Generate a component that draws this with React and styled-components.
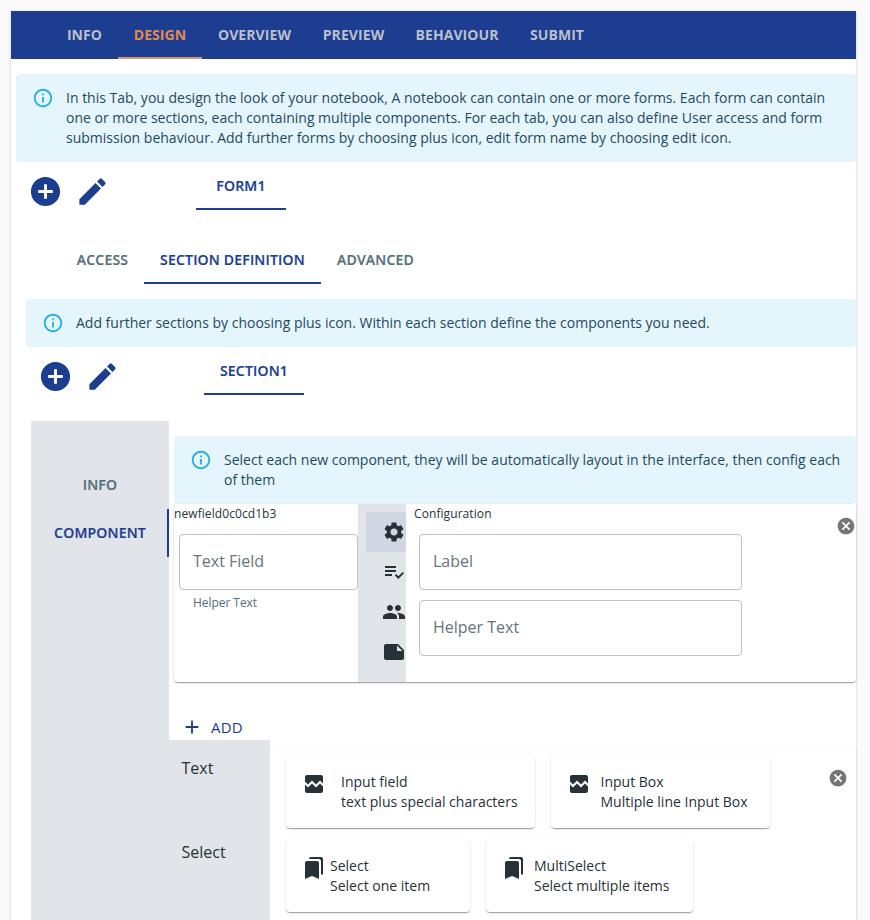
import React from 'react';
import styled, { createGlobalStyle } from 'styled-components';

const NAVY = '#1c3d90';
const INK = '#263238';
const MUTED = '#546e7a';
const PANEL = '#e1e4e8';
const paperShadow = '0 2px 1px -1px rgba(0,0,0,.2), 0 1px 1px rgba(0,0,0,.14), 0 1px 3px rgba(0,0,0,.12)';

const GlobalStyle = createGlobalStyle`
  * { box-sizing: border-box; }
  body {
    margin: 0;
    height: 920px;
    overflow: hidden;
    background: #fafafd;
    color: ${INK};
    font-family: "Open Sans", "Noto Sans", sans-serif;
    font-size: 14px;
    line-height: 20px;
  }
  button { font: inherit; border: 0; background: none; padding: 0; }
`;

const paths = {
  info: 'M11 7h2v2h-2zm0 4h2v6h-2zm1-9C6.48 2 2 6.48 2 12s4.48 10 10 10 10-4.48 10-10S17.52 2 12 2zm0 18c-4.41 0-8-3.59-8-8s3.59-8 8-8 8 3.59 8 8-3.59 8-8 8z',
  addCircle: 'M12 2C6.48 2 2 6.48 2 12s4.48 10 10 10 10-4.48 10-10S17.52 2 12 2zm5 11h-4v4h-2v-4H7v-2h4V7h2v4h4v2z',
  edit: 'M3 17.25V21h3.75L17.81 9.94l-3.75-3.75L3 17.25zM20.71 7.04c.39-.39.39-1.02 0-1.41l-2.34-2.34a.9959.9959 0 0 0-1.41 0l-1.83 1.83 3.75 3.75 1.83-1.83z',
  settings: 'M19.14 12.94c.04-.3.06-.61.06-.94 0-.32-.02-.64-.07-.94l2.03-1.58c.18-.14.23-.41.12-.61l-1.92-3.32c-.12-.22-.37-.29-.59-.22l-2.39.96c-.5-.38-1.03-.7-1.62-.94l-.36-2.54c-.04-.24-.24-.41-.48-.41h-3.84c-.24 0-.43.17-.47.41l-.36 2.54c-.59.24-1.13.57-1.62.94l-2.39-.96c-.22-.08-.47 0-.59.22L2.74 8.87c-.12.21-.08.47.12.61l2.03 1.58c-.05.3-.09.63-.09.94s.02.64.07.94l-2.03 1.58c-.18.14-.23.41-.12.61l1.92 3.32c.12.22.37.29.59.22l2.39-.96c.5.38 1.03.7 1.62.94l.36 2.54c.05.24.24.41.48.41h3.84c.24 0 .44-.17.47-.41l.36-2.54c.59-.24 1.13-.56 1.62-.94l2.39.96c.22.08.47 0 .59-.22l1.92-3.32c.12-.22.07-.47-.12-.61l-2.01-1.58zM12 15.6c-1.98 0-3.6-1.62-3.6-3.6s1.62-3.6 3.6-3.6 3.6 1.62 3.6 3.6-1.62 3.6-3.6 3.6z',
  checklist: 'M3 10h11v2H3zm0-4h11v2H3zm0 8h7v2H3zm17.59-2.07-4.25 4.24-2.12-2.12-1.41 1.41L16.34 19 22 13.34z',
  group: 'M16 11c1.66 0 2.99-1.34 2.99-3S17.66 5 16 5c-1.66 0-3 1.34-3 3s1.34 3 3 3zm-8 0c1.66 0 2.99-1.34 2.99-3S9.66 5 8 5C6.34 5 5 6.34 5 8s1.34 3 3 3zm0 2c-2.33 0-7 1.17-7 3.5V19h14v-2.5c0-2.33-4.67-3.5-7-3.5zm8 0c-.29 0-.62.02-.97.05 1.16.84 1.97 1.97 1.97 3.45V19h6v-2.5c0-2.33-4.67-3.5-7-3.5z',
  note: 'M22 10l-6-6H4c-1.1 0-2 .9-2 2v12.01c0 1.1.9 1.99 2 1.99l16-.01c1.1 0 2-.89 2-1.99v-8zm-7-4.5l5.5 5.5H15V5.5z',
  cancel: 'M12 2C6.47 2 2 6.47 2 12s4.47 10 10 10 10-4.47 10-10S17.53 2 12 2zm5 13.59L15.59 17 12 13.41 8.41 17 7 15.59 10.59 12 7 8.41 8.41 7 12 10.59 15.59 7 17 8.41 13.41 12 17 15.59z',
  add: 'M19 13h-6v6h-2v-6H5v-2h6V5h2v6h6v2z',
  broken: 'M21 5v6.59l-3-3.01-4 4.01-4-4-4 4-3-3.01V5c0-1.1.9-2 2-2h14c1.1 0 2 .9 2 2zm-3 6.42l3 3.01V19c0 1.1-.9 2-2 2H5c-1.1 0-2-.9-2-2v-6.58l3 2.99 4-4 4 4 4-3.99z',
  bookmarks: 'M19 18l2 1V3c0-1.1-.9-2-2-2H8.99C7.89 1 7 1.9 7 3h10c1.1 0 2 .9 2 2v13zM15 5H5c-1.1 0-2 .9-2 2v16l7-3 7 3V7c0-1.1-.9-2-2-2z',
};

const Svg = styled.svg`
  display: block;
  flex: none;
  width: ${(p) => p.$size}px;
  height: ${(p) => p.$size}px;
  fill: currentColor;
`;
const Icon = ({ name, size = 24 }) => (
  <Svg $size={size} viewBox="0 0 24 24"><path d={paths[name]} /></Svg>
);

const Page = styled.main`
  width: 845px;
  height: 909px;
  margin: 11px 0 0 11px;
  background: #fff;
  box-shadow: ${paperShadow};
`;

const Tab = styled.button`
  flex: none;
  width: ${(p) => p.$w}px;
  height: 48px;
  text-align: center;
  white-space: nowrap;
  font-weight: 600;
  letter-spacing: 0.19px;
  -webkit-text-stroke: 0.2px currentColor;
  color: ${(p) => (p.$on ? NAVY : MUTED)};
  box-shadow: ${(p) => (p.$on ? `inset 0 -2px ${NAVY}` : 'none')};
`;

const Header = styled.nav`
  display: flex;
  padding-left: 40px;
  background: ${NAVY};
`;
const HeaderTab = styled(Tab)`
  font-weight: 700;
  letter-spacing: 0.08px;
  -webkit-text-stroke: 0;
  color: ${(p) => (p.$on ? '#e18b50' : '#bbc0cb')};
  box-shadow: ${(p) => (p.$on ? 'inset 0 -2px #d39a6b' : 'none')};
`;

const AlertBox = styled.div`
  display: flex;
  padding: 6px 16px;
  border-radius: 4px;
  background: #e4f5fc;
  color: #1f4a60;
  margin: ${(p) => p.$margin};
`;
const AlertIcon = styled.span`
  padding: 7px 0;
  margin-right: 12px;
  color: #27aee8;
`;
const AlertText = styled.div`
  padding: 8px 0;
  white-space: nowrap;
`;
const Alert = ({ margin, children }) => (
  <AlertBox $margin={margin}>
    <AlertIcon><Icon name="info" size={22} /></AlertIcon>
    <AlertText>{children}</AlertText>
  </AlertBox>
);

const ActionRow = styled.div`
  display: flex;
  height: 48px;
  padding-left: ${(p) => p.$left}px;
`;
const Actions = styled.div`
  display: flex;
  gap: 12px;
  width: ${(p) => p.$w}px;
  padding-top: 12px;
  color: ${NAVY};
`;
const SectionTabs = styled.nav`
  display: flex;
  margin-top: 26px;
  padding-left: 50px;
`;

const Builder = styled.div`
  display: grid;
  grid-template-columns: 138px 687px;
  margin: 26px 0 0 20px;
  height: 499px;
`;
const SideBar = styled.nav`
  display: flex;
  flex-direction: column;
  padding-top: 40px;
  background: ${PANEL};
`;
const SideTab = styled(Tab)`
  box-shadow: ${(p) => (p.$on ? `inset -2px 0 ${NAVY}` : 'none')};
`;
const Content = styled.section`
  display: flex;
  flex-direction: column;
`;
const FieldCard = styled.div`
  display: grid;
  grid-template-columns: 184px 48px 1fr auto;
  height: 178px;
  margin-left: 5px;
  flex: none;
  border-radius: 4px;
  background: #fff;
  box-shadow: ${paperShadow};
`;
const Caption = styled.div`
  font-size: 12px;
  letter-spacing: 0.08px;
  height: 20px;
`;
const Preview = styled.div``;
const Config = styled.div`
  padding-left: 8px;
`;
const Field = styled.div`
  height: 56px;
  width: ${(p) => p.$w}px;
  margin: 10px 0 0 5px;
  padding: 16px 13px;
  border: 1px solid #bfc1c3;
  border-radius: 4px;
  font-size: 16px;
  color: #67747c;
`;
const Helper = styled(Caption)`
  margin: 3px 0 0 19px;
  letter-spacing: -0.05px;
  color: ${MUTED};
`;
const ToolStrip = styled.div`
  padding: 8px 0 0 8px;
  background: ${PANEL};
`;
const Tool = styled.button`
  display: flex;
  width: 40px;
  height: 40px;
  padding: 8px 0 0 16px;
  color: ${INK};
  background: ${(p) => (p.$on ? '#d0d6e2' : 'transparent')};
`;
const Close = styled.button`
  display: block;
  align-self: start;
  color: #757575;
  margin: ${(p) => p.$margin};
`;
const AddButton = styled.button`
  display: flex;
  align-items: center;
  align-self: flex-start;
  gap: 8px;
  height: 26px;
  margin: 32px 0 0 12px;
  font-size: 15px;
  letter-spacing: 0.2px;
  color: ${NAVY};
`;
const Picker = styled.div`
  display: grid;
  grid-template-columns: 101px 1fr;
  flex: 1;
`;
const Categories = styled.div`
  padding: 16px 0 0 12.5px;
  background: ${PANEL};
  font-size: 16px;
  line-height: 24px;
`;
const Category = styled.div`
  height: 84px;
`;
const Palette = styled.div`
  display: flex;
  margin-top: 8px;
  padding: 8px 0 0 16px;
  box-shadow: 0 0 2px rgba(0, 0, 0, 0.08);
  clip-path: inset(-2px -4px 0 0);
`;
const Rows = styled.div`
  display: flex;
  flex-direction: column;
  flex: 1;
  gap: 12px;
`;
const Row = styled.div`
  display: flex;
  gap: 16px;
`;
const Option = styled.button`
  display: flex;
  flex: none;
  width: ${(p) => p.$w}px;
  height: 72px;
  padding: 16px 0 0 16px;
  gap: ${(p) => p.$gap}px;
  border-radius: 4px;
  color: ${INK};
  background: #fff;
  text-align: left;
  white-space: nowrap;
  box-shadow: ${paperShadow};
`;

const headerTabs = [['INFO', 67], ['DESIGN', 84], ['OVERVIEW', 105], ['PREVIEW', 93], ['BEHAVIOUR', 114], ['SUBMIT', 86]];
const options = [
  [
    { w: 249, icon: 'broken', gap: 15, title: 'Input field', text: 'text plus special characters' },
    { w: 219, icon: 'broken', gap: 9.5, title: 'Input Box', text: 'Multiple line Input Box' },
  ],
  [
    { w: 184, icon: 'bookmarks', gap: 4, title: 'Select', text: 'Select one item' },
    { w: 207, icon: 'bookmarks', gap: 8, title: 'MultiSelect', text: 'Select multiple items' },
  ],
];

export default function App() {
  return (
    <>
      <GlobalStyle />
      <Page>
        <Header>
          {headerTabs.map(([label, w]) => (
            <HeaderTab key={label} $w={w} $on={label === 'DESIGN'}>{label}</HeaderTab>
          ))}
        </Header>
        <Alert margin="15px 0 0 5px">
          In this Tab, you design the look of your notebook, A notebook can contain one or more forms. Each form can contain<br />
          one or more sections, each containing multiple components. For each tab, you can also define User access and form<br />
          submission behaviour. Add further forms by choosing plus icon, edit form name by choosing edit icon.
        </Alert>
        <ActionRow $left={17}>
          <Actions $w={168}><Icon name="addCircle" size={35} /><Icon name="edit" size={35} /></Actions>
          <Tab $w={90} $on>FORM1</Tab>
        </ActionRow>
        <SectionTabs>
          <Tab $w={83}>ACCESS</Tab>
          <Tab $w={177} $on>SECTION DEFINITION</Tab>
          <Tab $w={109}>ADVANCED</Tab>
        </SectionTabs>
        <Alert margin="15px 0 0 15px">
          Add further sections by choosing plus icon. Within each section define the components you need.
        </Alert>
        <ActionRow $left={27}>
          <Actions $w={166}><Icon name="addCircle" size={35} /><Icon name="edit" size={35} /></Actions>
          <Tab $w={100} $on>SECTION1</Tab>
        </ActionRow>
        <Builder>
          <SideBar>
            <SideTab $w={138}>INFO</SideTab>
            <SideTab $w={138} $on>COMPONENT</SideTab>
          </SideBar>
          <Content>
            <Alert margin="15px 0 0 5px">
              Select each new component, they will be automatically layout in the interface, then config each<br />
              of them
            </Alert>
            <FieldCard>
              <Preview>
                <Caption>newfield0c0cd1b3</Caption>
                <Field $w={179}>Text Field</Field>
                <Helper>Helper Text</Helper>
              </Preview>
              <ToolStrip>
                <Tool $on><Icon name="settings" /></Tool>
                <Tool><Icon name="checklist" /></Tool>
                <Tool><Icon name="group" /></Tool>
                <Tool><Icon name="note" /></Tool>
              </ToolStrip>
              <Config>
                <Caption>Configuration</Caption>
                <Field $w={323}>Label</Field>
                <Field $w={323}>Helper Text</Field>
              </Config>
              <Close $margin="12px 0 0 0"><Icon name="cancel" size={20} /></Close>
            </FieldCard>
            <AddButton><Icon name="add" size={22} />ADD</AddButton>
            <Picker>
              <Categories>
                <Category>Text</Category>
                <Category>Select</Category>
              </Categories>
              <Palette>
                <Rows>
                  {options.map((row) => (
                    <Row key={row[0].title}>
                      {row.map((o) => (
                        <Option key={o.title} $w={o.w} $gap={o.gap}>
                          <Icon name={o.icon} />
                          <span>{o.title}<br />{o.text}</span>
                        </Option>
                      ))}
                    </Row>
                  ))}
                </Rows>
                <Close $margin="12px 8px 0 0"><Icon name="cancel" size={20} /></Close>
              </Palette>
            </Picker>
          </Content>
        </Builder>
      </Page>
    </>
  );
}
